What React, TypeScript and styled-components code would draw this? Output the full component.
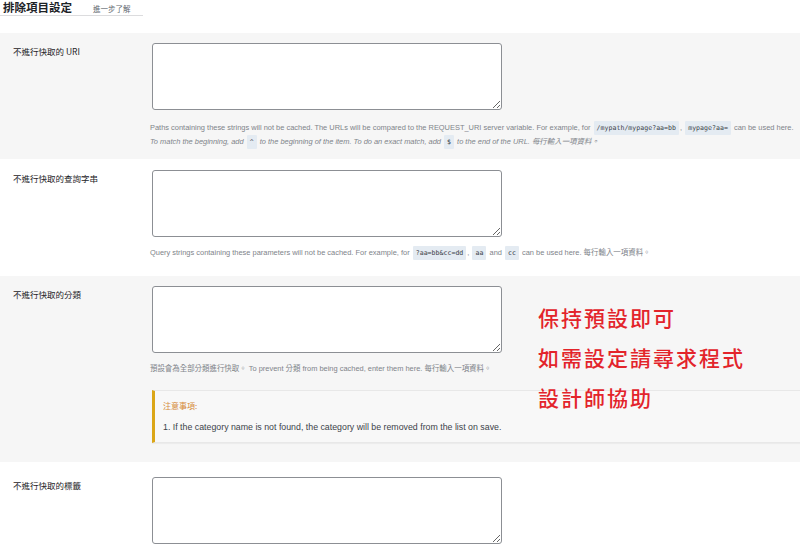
import React from 'react'
import styled, { createGlobalStyle } from 'styled-components'

const GlobalStyle = createGlobalStyle`
  html, body {
    margin: 0;
    padding: 0;
    background: #ffffff;
  }
  body {
    font-family: "Liberation Sans", "Noto Sans CJK TC", sans-serif;
    color: #1d2327;
  }
`

const Page = styled.div`
  position: relative;
  width: 800px;
  height: 547px;
  overflow: hidden;
  background: #fff;
`

const Header = styled.div`
  height: 33px;
`

const TitleBar = styled.div`
  display: flex;
  align-items: baseline;
  width: 143px;
  height: 16px;
  border-bottom: 1px solid #dcdcde;
  box-sizing: border-box;
  padding-left: 3px;
`

const Title = styled.h2`
  margin: 0;
  font-family: "Noto Sans CJK TC", sans-serif;
  font-size: 11.5px;
  line-height: 14px;
  font-weight: 600;
  color: #1d2327;
`

const MoreLink = styled.span`
  margin-left: 21px;
  font-family: "Noto Sans CJK TC", sans-serif;
  font-size: 7.5px;
  color: #646970;
`

const Section = styled.div<{ $gray?: boolean; $top: number; $bottom: number }>`
  display: flex;
  background: ${({ $gray }) => ($gray ? '#f6f6f6' : '#ffffff')};
  padding-top: ${({ $top }) => $top}px;
  padding-bottom: ${({ $bottom }) => $bottom}px;
`

const Label = styled.div`
  width: 139px;
  padding-left: 13px;
  padding-top: 2px;
  font-family: "Noto Sans CJK TC", sans-serif;
  font-size: 8.5px;
  line-height: 12px;
  font-weight: 400;
  color: #1d2327;
  flex-shrink: 0;
`

const Field = styled.div`
  flex: 1;
  min-width: 0;
`

const TextBox = styled.textarea`
  display: block;
  width: 350px;
  height: 67px;
  box-sizing: border-box;
  margin: 0;
  border: 1px solid #8c8f94;
  border-radius: 3px;
  background: #fff;
  resize: both;
  font-size: 8px;
`

const Description = styled.p<{ $gap?: number }>`
  margin: ${({ $gap }) => $gap ?? 9}px 0 0 -2px;
  font-family: "Liberation Sans", "Noto Sans CJK TC", sans-serif;
  font-size: 7.45px;
  line-height: 14px;
  color: #80848a;
  white-space: nowrap;
`

const Line = styled.span<{ $italic?: boolean }>`
  display: block;
  font-style: ${({ $italic }) => ($italic ? 'italic' : 'normal')};
`

const Code = styled.code`
  font-family: "DejaVu Sans Mono", monospace;
  font-size: 6.6px;
  background: #e4ebf2;
  color: #3c434a;
  padding: 3px 3px;
  margin: 0 1px;
  border-radius: 1px;
  font-style: normal;
`

const Notice = styled.div`
  margin-top: 14px;
  height: 53px;
  box-sizing: border-box;
  background: #f8f8f8;
  border-left: 3px solid #dba617;
  border-top: 1px solid #e8e8e8;
  border-bottom: 1px solid #e8e8e8;
  box-shadow: 0 1px 1px rgba(0, 0, 0, 0.04);
  padding: 9px 0 0 8px;
`

const NoticeTitle = styled.div`
  font-family: "Noto Sans CJK TC", sans-serif;
  font-size: 8px;
  line-height: 12px;
  color: #d58b3a;
`

const NoticeItem = styled.div`
  margin-top: 9px;
  font-family: "Liberation Sans", sans-serif;
  font-size: 8.8px;
  line-height: 12px;
  color: #3c434a;
`

const Annotation = styled.div`
  position: absolute;
  left: 538px;
  top: 297px;
  display: flex;
  flex-direction: column;
  font-family: "Noto Sans CJK TC", sans-serif;
  font-size: 21px;
  line-height: 40px;
  letter-spacing: 2px;
  font-weight: 500;
  color: #e3242b;
  pointer-events: none;
`

export default function App() {
  return (
    <Page>
      <GlobalStyle />
      <Header>
        <TitleBar>
          <Title>排除項目設定</Title>
          <MoreLink>進一步了解</MoreLink>
        </TitleBar>
      </Header>

      <Section $gray $top={10} $bottom={10}>
        <Label>不進行快取的 URI</Label>
        <Field>
          <TextBox />
          <Description $gap={11}>
            <Line>
              Paths containing these strings will not be cached. The URLs will be compared to the
              REQUEST_URI server variable. For example, for <Code>/mypath/mypage?aa=bb</Code>,{' '}
              <Code>mypage?aa=</Code> can be used here.
            </Line>
            <Line $italic>
              To match the beginning, add <Code>^</Code> to the beginning of the item. To do an
              exact match, add <Code>$</Code> to the end of the URL. 每行輸入一項資料。
            </Line>
          </Description>
        </Field>
      </Section>

      <Section $top={11} $bottom={16}>
        <Label>不進行快取的查詢字串</Label>
        <Field>
          <TextBox />
          <Description>
            <Line>
              Query strings containing these parameters will not be cached. For example, for{' '}
              <Code>?aa=bb&amp;cc=dd</Code>, <Code>aa</Code> and <Code>cc</Code> can be used here.
              每行輸入一項資料。
            </Line>
          </Description>
        </Field>
      </Section>

      <Section $gray $top={10} $bottom={19}>
        <Label>不進行快取的分類</Label>
        <Field>
          <TextBox />
          <Description>
            <Line>
              預設會為全部分類進行快取。 To prevent 分類 from being cached, enter them here.
              每行輸入一項資料。
            </Line>
          </Description>
          <Notice>
            <NoticeTitle>注意事項:</NoticeTitle>
            <NoticeItem>
              1. If the category name is not found, the category will be removed from the list on
              save.
            </NoticeItem>
          </Notice>
        </Field>
      </Section>

      <Section $top={15} $bottom={20}>
        <Label>不進行快取的標籤</Label>
        <Field>
          <TextBox />
        </Field>
      </Section>

      <Annotation>
        <span>保持預設即可</span>
        <span>如需設定請尋求程式</span>
        <span>設計師協助</span>
      </Annotation>
    </Page>
  )
}
